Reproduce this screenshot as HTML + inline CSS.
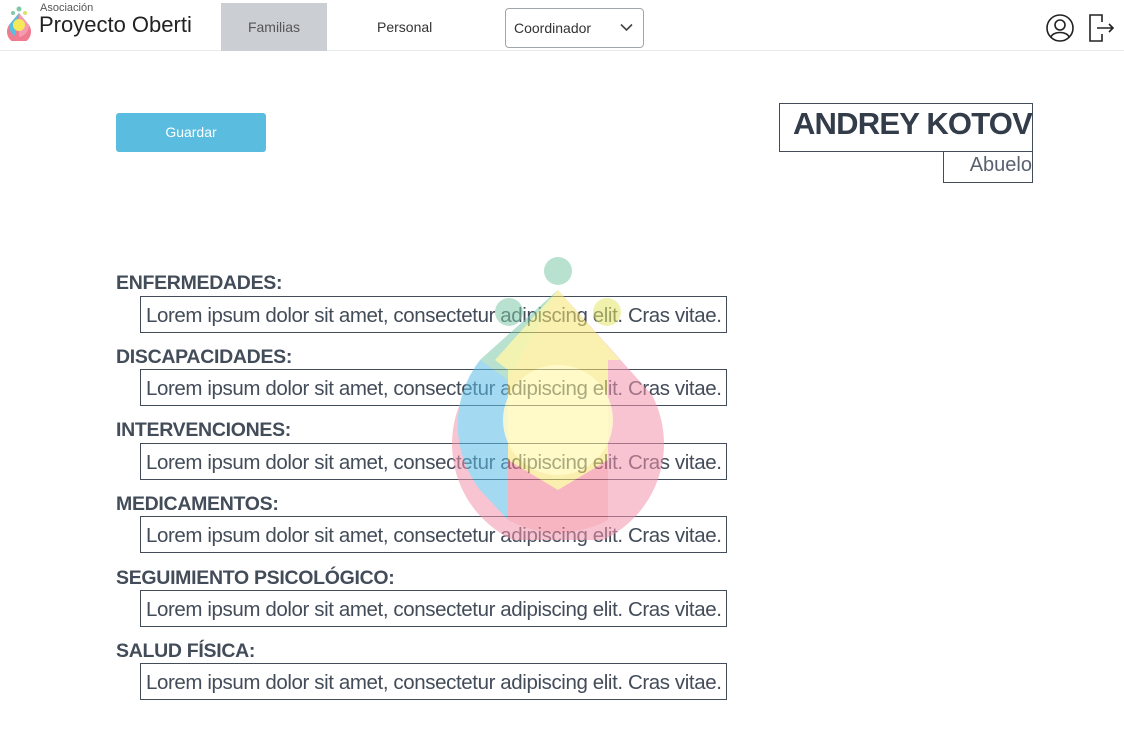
<!DOCTYPE html>
<html><head><meta charset="utf-8"><style>
*{margin:0;padding:0;box-sizing:border-box}
body{width:1124px;height:732px;background:#fff;font-family:"Liberation Sans",sans-serif;color:#434c59;position:relative;overflow:hidden}
.hdr{position:absolute;left:0;top:0;width:1124px;height:51px;border-bottom:1px solid #e8eaec}
.abs{position:absolute}
.lbl{position:absolute;left:116px;font-weight:bold;font-size:19.5px;letter-spacing:-0.3px;color:#434c59}
.box{position:absolute;left:140px;width:587px;height:37px;border:1px solid #434c59;font-size:20.5px;line-height:37px;padding-left:5px;white-space:nowrap;overflow:hidden;color:#434c59;letter-spacing:-0.4px}
</style></head><body>
<div class="hdr">
 <svg class="abs" style="left:5px;top:5px" width="28" height="36" viewBox="0 0 28 36">
  <circle cx="14" cy="4" r="2.5" fill="#7fc9a8"/><circle cx="8" cy="8" r="2" fill="#7fc9a8"/><circle cx="20" cy="8" r="2" fill="#d9e26a"/>
  <path d="M14 8 L24 20 A12 12 0 1 1 4 20 Z" fill="#f07a8f"/>
  <path d="M14 8 L24 20 A12 12 0 0 1 14 32 Z" fill="#f59bb0"/>
  <path d="M14 8 L4 20 A12 12 0 0 0 10 31 Z" fill="#58bfe0"/>
  <circle cx="14" cy="20" r="6" fill="#f5e95a"/>
 </svg>
 <div class="abs" style="left:40px;top:2px;font-size:11px;color:#555">Asociación</div>
 <div class="abs" style="left:39px;top:12px;font-size:22px;color:#222">Proyecto Oberti</div>
 <div class="abs" style="left:221px;top:3px;width:106px;height:48px;background:#cbcfd4;font-size:14px;color:#555;text-align:center;line-height:48px">Familias</div>
 <div class="abs" style="left:377px;top:19px;font-size:14px;color:#333">Personal</div>
 <div class="abs" style="left:505px;top:8px;width:139px;height:40px;border:1px solid #a0a6ad;border-radius:4px;font-size:14px;color:#333;line-height:38px;padding-left:8px">Coordinador
  <svg class="abs" style="right:10px;top:14px" width="13" height="9" viewBox="0 0 13 9"><path d="M1 1.5 L6.5 7 L12 1.5" fill="none" stroke="#444" stroke-width="1.6"/></svg></div>
 <svg class="abs" style="left:1045px;top:13px" width="30" height="30" viewBox="0 0 30 30"><circle cx="15" cy="15" r="13" fill="none" stroke="#222" stroke-width="1.6"/><circle cx="15" cy="12" r="5" fill="none" stroke="#222" stroke-width="1.6"/><path d="M6 24 C8 18 22 18 24 24" fill="none" stroke="#222" stroke-width="1.6"/></svg>
 <svg class="abs" style="left:1088px;top:13px" width="28" height="30" viewBox="0 0 28 30"><path d="M14 9 V2 H2 V28 H14 V21" fill="none" stroke="#222" stroke-width="1.6"/><path d="M9 15 H25 M21 11 L25 15 L21 19" fill="none" stroke="#222" stroke-width="1.6"/></svg>
</div>
<div class="abs" style="left:116px;top:113px;width:150px;height:39px;background:#5abcdf;border-radius:3px;color:#fff;font-size:14px;text-align:center;line-height:39px">Guardar</div>
<div class="abs" style="left:779px;top:103px;width:254px;height:49px;border:1px solid #434c59;font-weight:bold;font-size:31px;line-height:40px;text-align:right;overflow:hidden;white-space:nowrap;color:#333d49;letter-spacing:-0.8px">ANDREY KOTOV</div>
<div class="abs" style="left:943px;top:152px;width:90px;height:31px;border:1px solid #434c59;border-top:none;font-size:20px;text-align:right;color:#59616c;line-height:26px;overflow:hidden">Abuelo</div>

<div class="lbl" style="top:272px">ENFERMEDADES:</div>
<div class="box" style="top:296px">Lorem ipsum dolor sit amet, consectetur adipiscing elit. Cras vitae.</div>
<div class="lbl" style="top:346px">DISCAPACIDADES:</div>
<div class="box" style="top:369px">Lorem ipsum dolor sit amet, consectetur adipiscing elit. Cras vitae.</div>
<div class="lbl" style="top:419px">INTERVENCIONES:</div>
<div class="box" style="top:443px">Lorem ipsum dolor sit amet, consectetur adipiscing elit. Cras vitae.</div>
<div class="lbl" style="top:493px">MEDICAMENTOS:</div>
<div class="box" style="top:516px">Lorem ipsum dolor sit amet, consectetur adipiscing elit. Cras vitae.</div>
<div class="lbl" style="top:567px">SEGUIMIENTO PSICOLÓGICO:</div>
<div class="box" style="top:590px">Lorem ipsum dolor sit amet, consectetur adipiscing elit. Cras vitae.</div>
<div class="lbl" style="top:640px">SALUD FÍSICA:</div>
<div class="box" style="top:663px">Lorem ipsum dolor sit amet, consectetur adipiscing elit. Cras vitae.</div>

<svg class="abs" style="left:440px;top:250px;opacity:.55;pointer-events:none" width="240" height="290" viewBox="0 0 240 290">
 <circle cx="118" cy="21" r="14" fill="#7fc9a8"/><circle cx="69" cy="62" r="14" fill="#7fc9a8"/><circle cx="167" cy="62" r="14" fill="#e4e66a"/>
 <path d="M118 40 L212 145 A106 106 0 1 1 24 145 Z" fill="#f395ae"/>
 <path d="M118 40 L40 110 A106 106 0 0 0 40 240 L68 270 L68 120 Z" fill="#5bbde6"/>
 <path d="M118 40 L40 110 L68 130 Z" fill="#7fc9a8"/>
 <path d="M68 200 L118 230 L168 200 L168 270 A106 106 0 0 1 68 270 Z" fill="#f07a8f"/>
 <path d="M118 40 L55 110 L68 120 L68 210 L118 240 L168 210 L168 110 L180 110 Z" fill="#f7ee6b" opacity=".9"/>
 <circle cx="118" cy="170" r="55" fill="#fff7a0" opacity=".9"/>
</svg>
</body></html>
